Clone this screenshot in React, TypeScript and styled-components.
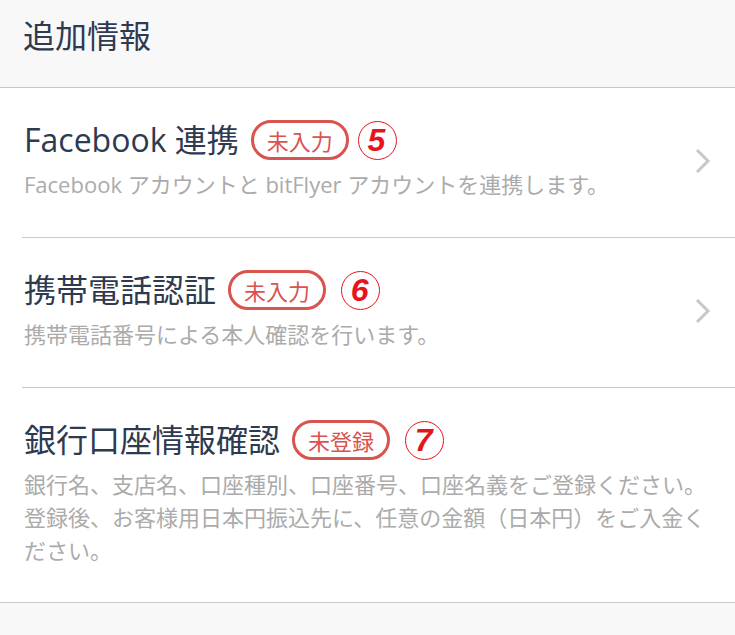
import React from "react";
import styled, { createGlobalStyle } from "styled-components";

const Global = createGlobalStyle`
  html, body { margin: 0; padding: 0; background: #f8f8f8; }
  body { font-family: "Open Sans", "Noto Sans CJK JP", sans-serif; -webkit-font-smoothing: antialiased; }
`;

const Page = styled.div`
  width: 735px;
  min-height: 635px;
  background: #f8f8f8;
`;

const Header = styled.div`
  height: 88px;
  box-sizing: border-box;
  padding: 12px 0 0 23px;
  background: #f8f8f8;
  border-bottom: 1px solid #c8c7cc;
  font-family: "Noto Sans CJK JP", sans-serif;
  font-size: 32px;
  line-height: 44px;
  color: #2d3a4f;
`;

const List = styled.div`
  background: #ffffff;
  border-bottom: 1px solid #c8c7cc;
`;

const Row = styled.div<{ $last?: boolean }>`
  margin-left: 22px;
  padding: 32px 24px ${(p) => (p.$last ? "35px" : "36px")} 2px;
  display: flex;
  align-items: center;
  border-bottom: ${(p) => (p.$last ? "none" : "1px solid #c8c7cc")};
`;

const Body = styled.div`
  flex: 1;
  min-width: 0;
`;

const TitleLine = styled.div`
  display: flex;
  align-items: center;
  height: 40px;
`;

const Title = styled.span`
  font-size: 32px;
  color: #2d3a4f;
  line-height: 40px;
  white-space: nowrap;
`;

const Badge = styled.span`
  margin-left: 12px;
  box-sizing: border-box;
  height: 40px;
  padding: 0 13px;
  border: 3px solid #d9534f;
  border-radius: 20px;
  display: inline-flex;
  align-items: center;
  font-family: "Noto Sans CJK JP", sans-serif;
  font-size: 22px;
  color: #d9534f;
`;

const Circled = styled.span<{ $gap: number }>`
  margin-left: ${(p) => p.$gap}px;
  width: 39px;
  height: 39px;
  box-sizing: border-box;
  border: 1.5px solid #e8141c;
  border-radius: 50%;
  display: inline-flex;
  align-items: center;
  justify-content: center;
  font-family: "Liberation Sans", sans-serif;
  font-weight: 700;
  font-style: italic;
  font-size: 32px;
  line-height: 1;
  color: #e8141c;
  padding-right: 2px;
`;

const Desc = styled.div`
  margin-top: 8px;
  font-size: 22px;
  line-height: 33px;
  color: #ababab;
`;

const Chevron = styled.svg`
  flex: none;
  width: 16px;
  height: 26px;
`;

const Arrow = () => (
  <Chevron viewBox="0 0 16 26">
    <path d="M2 2 L13 13 L2 24" fill="none" stroke="#c7c7cc" strokeWidth="3" />
  </Chevron>
);

export default function App() {
  return (
    <Page>
      <Global />
      <Header>追加情報</Header>
      <List>
        <Row>
          <Body>
            <TitleLine>
              <Title>Facebook 連携</Title>
              <Badge>未入力</Badge>
              <Circled $gap={9}>5</Circled>
            </TitleLine>
            <Desc>Facebook アカウントと bitFlyer アカウントを連携します。</Desc>
          </Body>
          <Arrow />
        </Row>
        <Row>
          <Body>
            <TitleLine>
              <Title>携帯電話認証</Title>
              <Badge>未入力</Badge>
              <Circled $gap={15}>6</Circled>
            </TitleLine>
            <Desc>携帯電話番号による本人確認を行います。</Desc>
          </Body>
          <Arrow />
        </Row>
        <Row $last>
          <Body>
            <TitleLine>
              <Title>銀行口座情報確認</Title>
              <Badge>未登録</Badge>
              <Circled $gap={15}>7</Circled>
            </TitleLine>
            <Desc>
              銀行名、支店名、口座種別、口座番号、口座名義をご登録ください。
              登録後、お客様用日本円振込先に、任意の金額（日本円）をご入金ください。
            </Desc>
          </Body>
        </Row>
      </List>
    </Page>
  );
}
